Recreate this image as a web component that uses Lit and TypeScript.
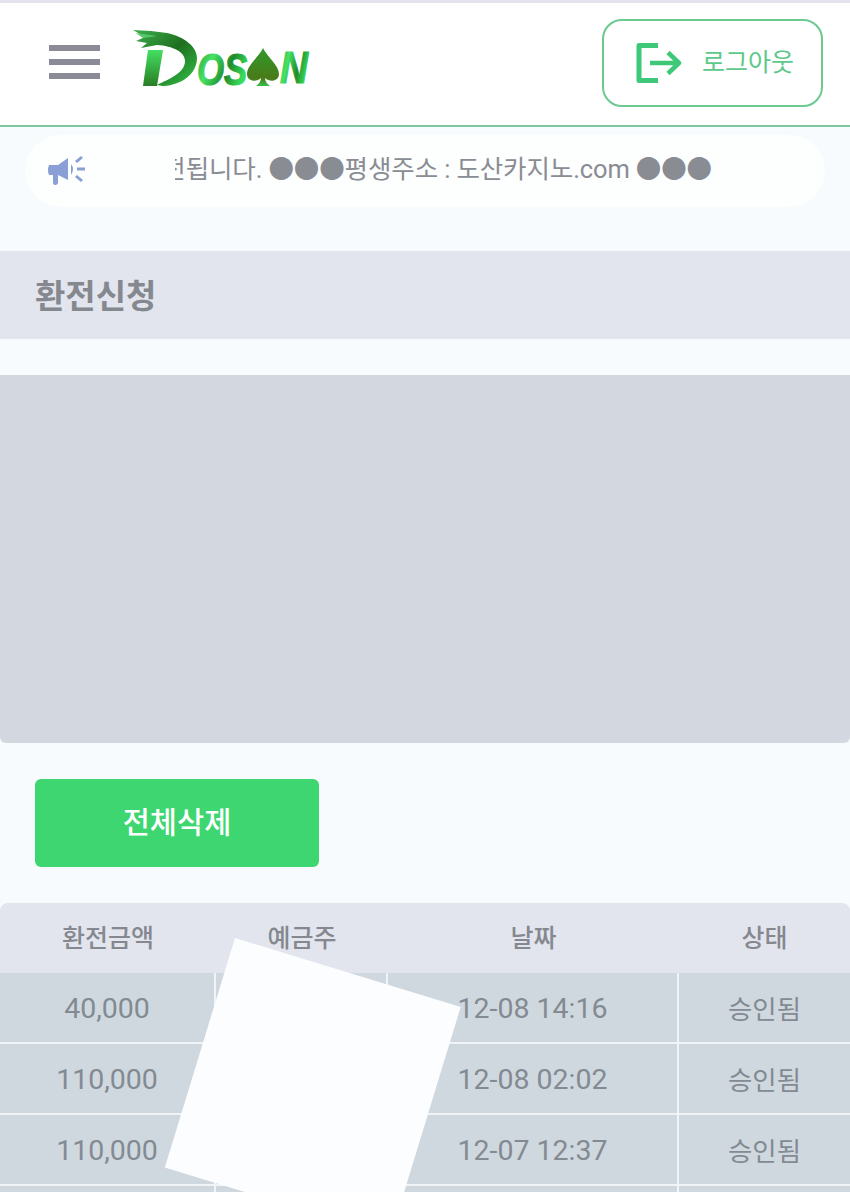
import { LitElement, html, css, svg } from "lit";
import { customElement } from "lit/decorators.js";

const rows = [
  { amount: "40,000", date: "12-08 14:16", status: "승인됨" },
  { amount: "110,000", date: "12-08 02:02", status: "승인됨" },
  { amount: "110,000", date: "12-07 12:37", status: "승인됨" },
  { amount: "", date: "", status: "" },
];

// wordmark: brush stroke and spade are shapes, the letters stay real text
const logo = svg`
  <defs>
    <linearGradient id="ink" x1="0" y1="0" x2="1" y2="0.4">
      <stop offset="0" stop-color="#2c9a38" />
      <stop offset="0.35" stop-color="#46e265" />
      <stop offset="0.7" stop-color="#1f8a2a" />
      <stop offset="1" stop-color="#38dc58" />
    </linearGradient>
    <linearGradient id="brush" x1="0" y1="0" x2="1" y2="1">
      <stop offset="0" stop-color="#3fb050" />
      <stop offset="0.5" stop-color="#1f6f1e" />
      <stop offset="1" stop-color="#34c54c" />
    </linearGradient>
    <linearGradient id="stem" x1="0" y1="0" x2="0" y2="1">
      <stop offset="0" stop-color="#43df62" />
      <stop offset="1" stop-color="#2a7d24" />
    </linearGradient>
    <linearGradient id="spade" x1="0" y1="0" x2="0" y2="1">
      <stop offset="0" stop-color="#2f9a2c" />
      <stop offset="0.8" stop-color="#4a7a18" />
      <stop offset="1" stop-color="#35c04a" />
    </linearGradient>
  </defs>
  <path fill="url(#brush)" d="M0 1 L18 2 L34 4 C52 8 64 18 64 29 C64 44 50 56 30 57 L24 56 C36 50 52 44 52 32 C52 23 40 17 24 16 L8 19 L14 14 L3 12 L12 8 Z" />
  <path fill="#55c86a" d="M3 4 L24 7 L10 9 Z" />
  <path fill="url(#stem)" d="M15 21 L30 21 L24 57 L10 57 Z" />
  <text class="letters" fill="url(#ink)" stroke="url(#ink)" stroke-width="1.2" transform="translate(64 56) scale(0.79 1)">OS</text>
  <path fill="url(#spade)" d="M130 19 C134 28 146 36 146 45 C146 52 137 54 132 49 C132 52 134 55 137 57 L123 57 C126 55 128 52 128 49 C123 54 114 52 114 45 C114 36 126 28 130 19 Z" />
  <text class="letters" fill="url(#ink)" stroke="url(#ink)" stroke-width="1.2" transform="translate(147 54) scale(0.88 1)">N</text>
`;

@customElement("app-root")
export class AppRoot extends LitElement {
  static styles = css`
    :host {
      display: block;
      position: relative;
      height: 1192px;
      overflow: hidden;
      background: #f8fbfe;
      font-family: "Roboto", "Noto Sans CJK KR", sans-serif;
      color: #85888f;
    }

    .topbar {
      height: 122px;
      box-sizing: content-box;
      border-top: 3px solid #e4e4ee;
      border-bottom: 2px solid #7cc8a0;
      background: #fff;
      display: flex;
      align-items: center;
      padding: 0 27px 0 49px;
    }

    .burger {
      width: 51px;
      height: 34px;
      margin-top: -4px;
      display: flex;
      flex-direction: column;
      justify-content: space-between;
    }

    .burger span {
      height: 6px;
      background: #8b8b98;
    }

    .logo {
      width: 180px;
      height: 62px;
      margin: -9px 0 0 33px;
      overflow: visible;
    }

    .logo .letters {
      font-family: "Liberation Sans", sans-serif;
      font-weight: 700;
      font-style: italic;
      font-size: 44px;
    }

    .logout {
      margin-left: auto;
      width: 221px;
      height: 88px;
      margin-top: -2px;
      box-sizing: border-box;
      border: 2px solid #6cc98f;
      border-radius: 20px;
      display: flex;
      align-items: center;
      gap: 20px;
      padding-left: 32px;
      color: #5cc98a;
      font-size: 25px;
    }

    .logout svg {
      width: 46px;
      height: 40px;
    }

    .logout span {
      padding-bottom: 7px;
    }

    .notice {
      height: 72px;
      margin: 8px 25px 0;
      border-radius: 36px;
      background: #fdfefe;
      display: flex;
      align-items: center;
      padding-left: 23px;
      color: #8a8c94;
    }

    .notice svg {
      width: 38px;
      height: 32px;
      flex: none;
    }

    .ticker {
      width: 537px;
      margin-left: 89px;
      overflow: hidden;
      display: flex;
      justify-content: flex-end;
      white-space: nowrap;
      font-size: 25.5px;
      letter-spacing: -0.12px;
      line-height: 36px;
      margin-top: -4px;
    }

    .title {
      height: 88px;
      margin-top: 44px;
      background: #e2e5ee;
      display: flex;
      align-items: center;
      padding: 0 0 2px 35px;
      box-sizing: border-box;
      font-size: 33px;
      font-weight: 700;
      color: #85888f;
    }

    .panel {
      height: 368px;
      margin-top: 36px;
      background: #d3d8e0;
      border-radius: 0 0 6px 6px;
    }

    .clear {
      width: 284px;
      height: 88px;
      margin: 36px 0 0 35px;
      padding-bottom: 6px;
      box-sizing: border-box;
      background: #3ed671;
      border-radius: 6px;
      display: flex;
      align-items: center;
      justify-content: center;
      color: #fff;
      font-size: 29.5px;
      font-weight: 500;
    }

    .table {
      margin-top: 36px;
      display: grid;
      grid-template-columns: 216px 172px 291px 1fr;
    }

    .table > div {
      display: flex;
      align-items: center;
      justify-content: center;
      box-sizing: border-box;
    }

    .head {
      height: 70px;
      padding-bottom: 5px;
      background: #e2e5ee;
      font-size: 25px;
      font-weight: 500;
      color: #85888f;
    }

    .head.first {
      border-top-left-radius: 8px;
    }

    .head.last {
      border-top-right-radius: 8px;
    }

    .cell {
      height: 71px;
      padding-top: 1px;
      background: #d0d8df;
      border-bottom: 2px solid #f1f4f7;
      border-right: 2px solid #f1f4f7;
      color: #838a92;
      font-size: 28.5px;
    }

    .cell.last {
      border-right: 0;
      padding-top: 0;
      font-size: 26.5px;
    }

    /* blank sheet lying across the name column */
    .sheet {
      position: absolute;
      left: 235px;
      top: 938px;
      width: 236px;
      height: 240px;
      background: #fcfdff;
      transform-origin: 0 0;
      transform: rotate(17deg);
    }
  `;

  render() {
    return html`
      <header class="topbar">
        <div class="burger"><span></span><span></span><span></span></div>
        <svg class="logo" viewBox="0 0 180 62">${logo}</svg>
        <div class="logout">
          <svg viewBox="0 0 46 40" fill="none" stroke="#3ec878" stroke-width="4.5" stroke-linejoin="round">
            <path d="M22 2.5 H3 V37.5 H22" stroke-width="5" />
            <path d="M14 20 H42 M32 9.5 L43 20 L32 30.5" />
          </svg>
          <span>로그아웃</span>
        </div>
      </header>

      <div class="notice">
        <svg viewBox="0 0 38 32" fill="#8a9fd6">
          <path d="M1 10 H10 L20 3 V25 L10 20 V27 Q10 30 7 30 Q5 30 5 27 V20 H1 Q-1 15 1 10 Z" />
          <path d="M23 9 Q27 14 23 20 Z" />
          <rect x="29" y="12.5" width="8" height="3" />
          <path d="M27 6 L33 1 L35 3 L29 8 Z M27 22 L29 20 L35 25 L33 27 Z" />
        </svg>
        <div class="ticker">
          <span>환전됩니다. ●●●평생주소 : 도산카지노.com ●●●</span>
        </div>
      </div>

      <div class="title">환전신청</div>
      <div class="panel"></div>
      <div class="clear">전체삭제</div>

      <div class="table">
        <div class="head first">환전금액</div>
        <div class="head">예금주</div>
        <div class="head">날짜</div>
        <div class="head last">상태</div>
        ${rows.map(
          (r) => html`
            <div class="cell">${r.amount}</div>
            <div class="cell"></div>
            <div class="cell">${r.date}</div>
            <div class="cell last">${r.status}</div>
          `
        )}
      </div>

      <div class="sheet"></div>
    `;
  }
}
